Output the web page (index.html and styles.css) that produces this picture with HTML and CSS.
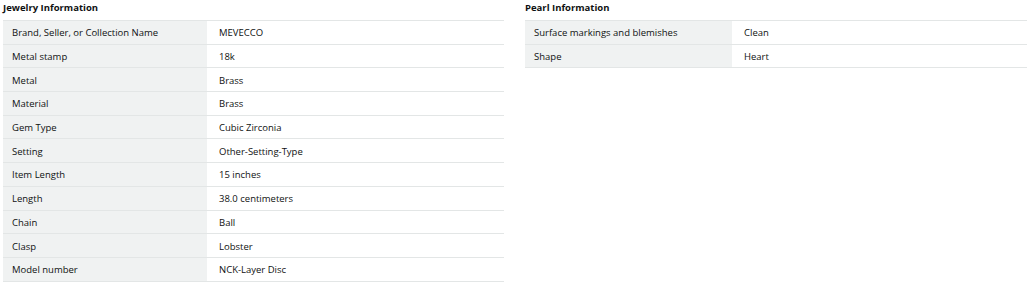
FILE: index.html
```html
<!DOCTYPE html>
<html>
<head>
<meta charset="utf-8">
<link rel="stylesheet" href="styles.css">
</head>
<body>
<div class="page">
  <section class="panel">
    <h2 class="title">Jewelry Information</h2>
    <table class="spec">
      <tr><th>Brand, Seller, or Collection Name</th><td>MEVECCO</td></tr>
      <tr><th>Metal stamp</th><td>18k</td></tr>
      <tr><th>Metal</th><td>Brass</td></tr>
      <tr><th>Material</th><td>Brass</td></tr>
      <tr><th>Gem Type</th><td>Cubic Zirconia</td></tr>
      <tr><th>Setting</th><td>Other-Setting-Type</td></tr>
      <tr><th>Item Length</th><td>15 inches</td></tr>
      <tr><th>Length</th><td>38.0 centimeters</td></tr>
      <tr><th>Chain</th><td>Ball</td></tr>
      <tr><th>Clasp</th><td>Lobster</td></tr>
      <tr><th>Model number</th><td>NCK-Layer Disc</td></tr>
    </table>
  </section>
  <section class="panel">
    <h2 class="title">Pearl Information</h2>
    <table class="spec">
      <tr><th>Surface markings and blemishes</th><td>Clean</td></tr>
      <tr><th>Shape</th><td>Heart</td></tr>
    </table>
  </section>
</div>
</body>
</html>
```

FILE: styles.css
```css
html, body {
  margin: 0;
  padding: 0;
  background: #ffffff;
}
body {
  font-family: "Open Sans", "Liberation Sans", Arial, sans-serif;
  color: #0f1111;
}
.page {
  display: grid;
  grid-template-columns: 501px 502px;
  column-gap: 21px;
  padding: 0 4px 0 3px;
}
.title {
  margin: 0;
  font-size: 9.5px;
  font-weight: 700;
  line-height: 16px;
  height: 20px;
}
.spec {
  width: 100%;
  border-collapse: collapse;
  border-top: 1px solid #e3e6e6;
  font-size: 9.5px;
}
.spec tr {
  border-bottom: 1px solid #e3e6e6;
  height: 23.7px;
}
.spec th {
  width: 195px;
  background: #f0f2f2;
  text-align: left;
  font-weight: 400;
  padding: 1px 0 0 9px;
  vertical-align: middle;
}
.spec td {
  padding: 1px 0 0 12px;
  vertical-align: middle;
}
.panel:last-child .spec th {
  width: 198px;
}
```
